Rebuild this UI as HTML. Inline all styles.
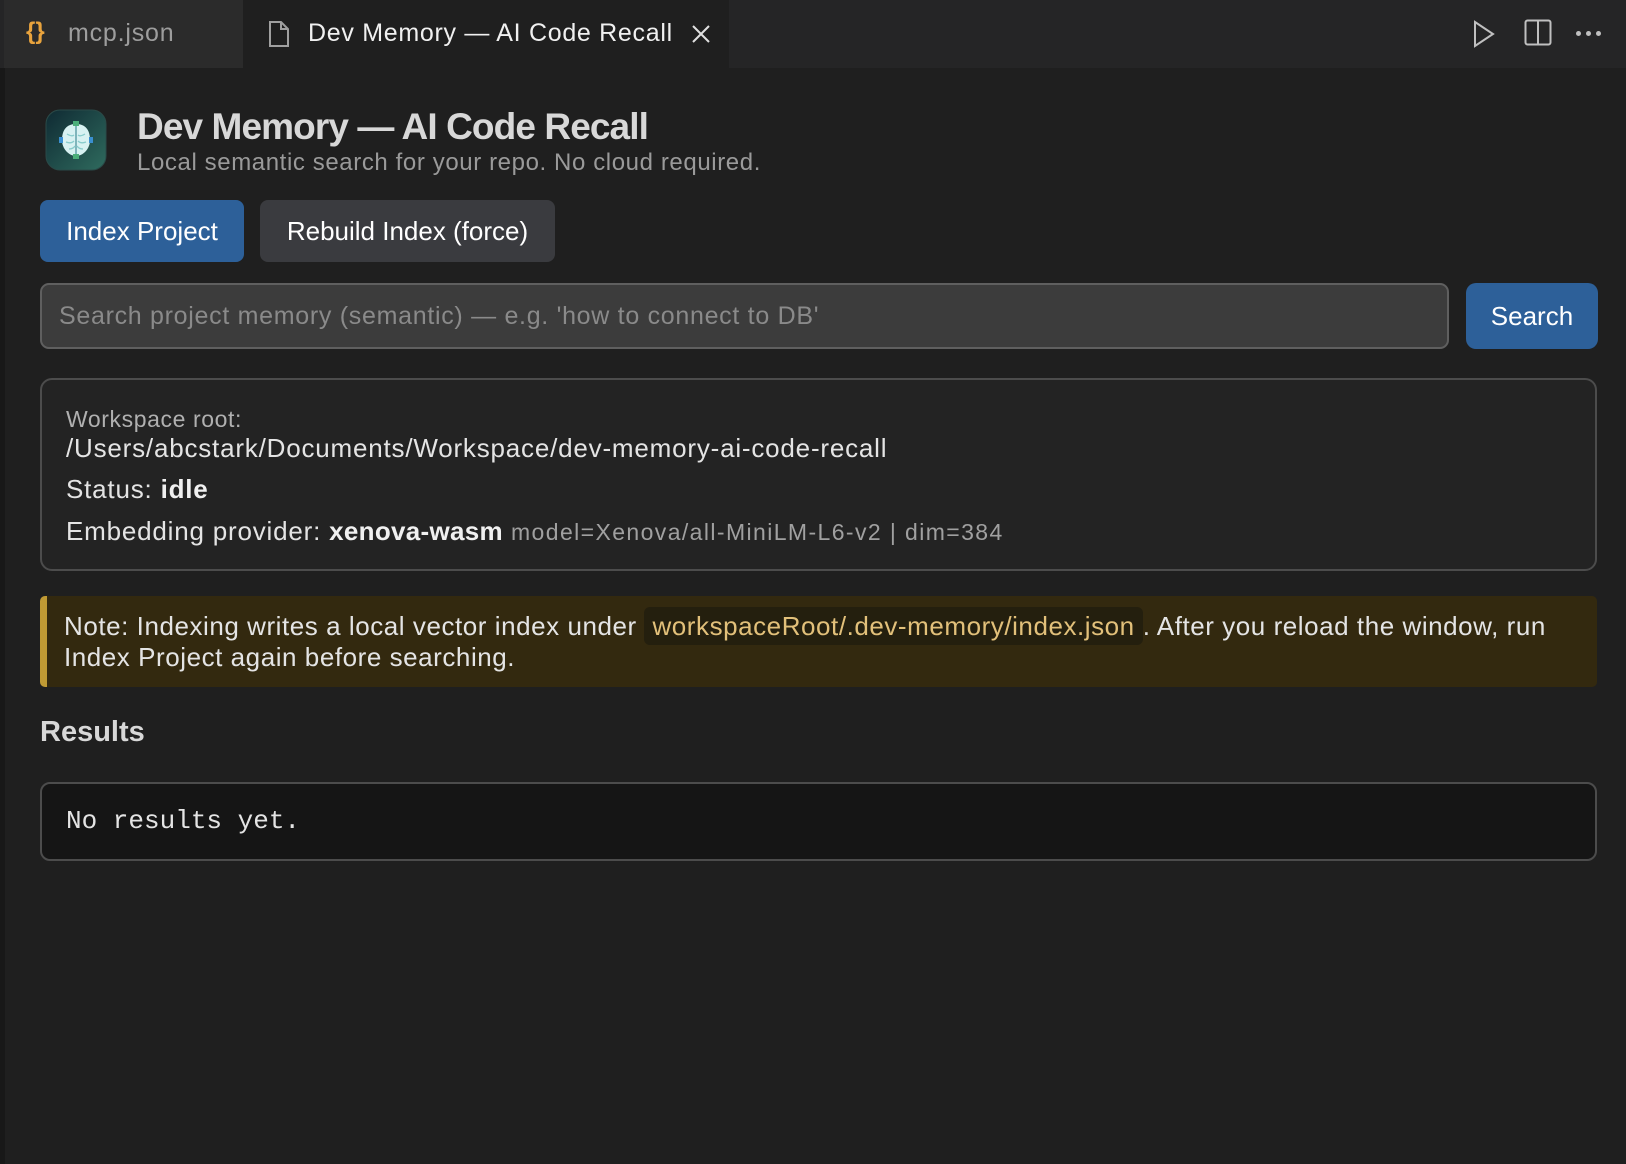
<!DOCTYPE html>
<html><head><meta charset="utf-8"><style>
*{box-sizing:border-box;margin:0;padding:0}
body{width:1626px;height:1164px;background:#1f1f1f;font-family:"Liberation Sans",sans-serif;position:relative;overflow:hidden;color:#d4d4d4}
.a{position:absolute;white-space:nowrap}
.t{font-size:26px;letter-spacing:0.8px}
</style></head><body>
<div class="a" style="left:0;top:0;width:1626px;height:68px;background:#252526"></div>
<div class="a" style="left:0;top:68px;width:5px;height:1096px;background:#181818"></div>
<div class="a" style="left:4px;top:0;width:239px;height:68px;background:#2b2b2b"></div>
<div class="a" style="left:26px;top:18px;font-size:24px;color:#e8a33d;font-weight:bold">{}</div>
<div class="a" style="left:68px;top:19px;font-size:25px;color:#9d9d9d;letter-spacing:0.8px">mcp.json</div>
<div class="a" style="left:243px;top:0;width:486px;height:68px;background:#1f1f1f"></div>
<svg class="a" style="left:268px;top:20px" width="22" height="28" viewBox="0 0 22 28"><path d="M2 2h11l7 7v17H2z M13 2v7h7" fill="none" stroke="#a0a0a0" stroke-width="2"/></svg>
<div class="a" style="left:308px;top:19px;font-size:25px;color:#f0f0f0;letter-spacing:0.7px">Dev Memory — AI Code Recall</div>
<svg class="a" style="left:691px;top:24px" width="20" height="20" viewBox="0 0 20 20"><path d="M2 2L18 18M18 2L2 18" stroke="#e0e0e0" stroke-width="2"/></svg>
<svg class="a" style="left:1472px;top:20px" width="24" height="28" viewBox="0 0 24 28"><path d="M3 2L21 14L3 26z" fill="none" stroke="#c0c0c0" stroke-width="2"/></svg>
<svg class="a" style="left:1524px;top:19px" width="28" height="28" viewBox="0 0 28 28"><rect x="1.5" y="1.5" width="25" height="24" rx="2" fill="none" stroke="#c0c0c0" stroke-width="2"/><path d="M14 2v24" stroke="#c0c0c0" stroke-width="2"/></svg>
<div class="a" style="left:1576px;top:31px;width:5px;height:5px;border-radius:3px;background:#c0c0c0;box-shadow:10px 0 #c0c0c0,20px 0 #c0c0c0"></div>

<svg class="a" style="left:45px;top:109px" width="62" height="62" viewBox="0 0 62 62"><defs><linearGradient id="g" x1="0" y1="0" x2="1" y2="1"><stop offset="0" stop-color="#0f2a33"/><stop offset="1" stop-color="#2f6b5e"/></linearGradient></defs><rect x="1" y="1" width="60" height="60" rx="14" fill="url(#g)" stroke="#2a4a48"/><path d="M31 15 C20 15 17 23 17 31 C17 40 24 47 31 47 C38 47 45 40 45 31 C45 23 42 15 31 15z" fill="#d8f2f2"/><path d="M31 14v34" stroke="#7fb5bb" stroke-width="2"/><path d="M22 25q5 3 7 1M40 25q-5 3-7 1M21 33q5 2 8 -1M41 33q-5 2-8-1M24 40q4 0 6-3M38 40q-4 0-6-3" stroke="#8cc" stroke-width="1.3" fill="none"/><rect x="28" y="12" width="6" height="5" fill="#4caf7a"/><rect x="28" y="45" width="6" height="5" fill="#4caf7a"/><rect x="14" y="28" width="4" height="6" fill="#3a8fd0"/><rect x="44" y="28" width="4" height="6" fill="#3a8fd0"/></svg>
<div class="a" style="left:137px;top:106px;font-size:37px;font-weight:bold;color:#d8d8d8;letter-spacing:-0.9px">Dev Memory — AI Code Recall</div>
<div class="a" style="left:137px;top:149px;font-size:24px;color:#9a9a9a;letter-spacing:0.6px">Local semantic search for your repo. No cloud required.</div>

<div class="a" style="left:40px;top:200px;width:204px;height:62px;background:#2d6099;border-radius:8px;color:#fff;font-size:26px;line-height:62px;text-align:center">Index Project</div>
<div class="a" style="left:260px;top:200px;width:295px;height:62px;background:#3a3b3f;border-radius:8px;color:#fff;font-size:26px;line-height:62px;text-align:center">Rebuild Index (force)</div>

<div class="a" style="left:40px;top:283px;width:1409px;height:66px;background:#3c3c3c;border:2px solid #5f5f5f;border-radius:9px;color:#8a8a8a;font-size:25px;letter-spacing:0.7px;line-height:62px;padding-left:17px">Search project memory (semantic) — e.g. 'how to connect to DB'</div>
<div class="a" style="left:1466px;top:283px;width:132px;height:66px;background:#2d6099;border-radius:10px;color:#fff;font-size:26px;line-height:66px;text-align:center">Search</div>

<div class="a" style="left:40px;top:378px;width:1557px;height:193px;background:#232323;border:2px solid #4c4c4c;border-radius:12px"></div>
<div class="a" style="left:66px;top:406px;font-size:23px;color:#b0b0b0;letter-spacing:0.6px">Workspace root:</div>
<div class="a t" style="left:66px;top:433px;color:#e4e4e4">/Users/abcstark/Documents/Workspace/dev-memory-ai-code-recall</div>
<div class="a t" style="left:66px;top:474px;color:#e4e4e4">Status: <b style="color:#f0f0f0">idle</b></div>
<div class="a t" style="left:66px;top:516px;color:#e4e4e4">Embedding provider: <b style="color:#f0f0f0;letter-spacing:0.3px">xenova-wasm</b> <span style="font-size:23px;color:#a0a0a0;letter-spacing:1.4px">model=Xenova/all-MiniLM-L6-v2 | dim=384</span></div>

<div class="a" style="left:40px;top:596px;width:1557px;height:91px;background:#33290f;border-left:7px solid #c09a34;border-radius:5px"></div>
<div class="a t" style="left:64px;top:611px;color:#e4e4e4;letter-spacing:0.55px">Note: Indexing writes a local vector index under <span style="background:#241f0e;color:#e2c07a;padding:4px 8px;border-radius:6px">workspaceRoot/.dev-memory/index.json</span>. After you reload the window, run</div>
<div class="a t" style="left:64px;top:642px;color:#e4e4e4;letter-spacing:0.55px">Index Project again before searching.</div>

<div class="a" style="left:40px;top:716px;font-size:29px;font-weight:bold;color:#d8d8d8">Results</div>
<div class="a" style="left:40px;top:782px;width:1557px;height:79px;background:#151515;border:2px solid #4c4c4c;border-radius:10px;font-family:'Liberation Mono',monospace;font-size:26px;color:#e4e4e4;line-height:75px;padding-left:24px">No results yet.</div>
</body></html>
